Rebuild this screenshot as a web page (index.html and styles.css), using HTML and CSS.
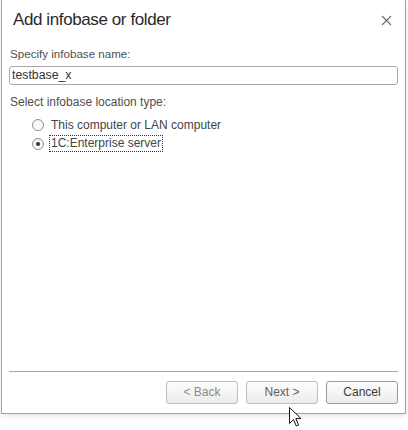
FILE: index.html
```html
<!DOCTYPE html>
<html>
<head>
	<meta charset="utf-8">
	<title>Add infobase or folder</title>
	<link rel="stylesheet" href="styles.css">
</head>
<body>
	<div class="dialog">
		<div class="title">
			<span class="caption">Add infobase or folder</span>
			<span class="close">
				<svg width="11" height="11" viewBox="0 0 11 11"><path d="M1 1 L10 10 M10 1 L1 10" stroke="#6b6b6b" stroke-width="1.1" fill="none"/></svg>
			</span>
		</div>
		<div class="content">
			<div class="label first">Specify infobase name:</div>
			<div class="input">testbase_x</div>
			<div class="label second">Select infobase location type:</div>
			<ul class="radios">
				<li><span class="radio"></span><span class="text">This computer or LAN computer</span></li>
				<li><span class="radio checked"></span><span class="text focus">1C:Enterprise server</span></li>
			</ul>
		</div>
		<div class="footer">
			<div class="line"></div>
			<div class="buttons">
				<span class="btn disabled">&lt; Back</span>
				<span class="btn next">Next &gt;</span>
				<span class="btn cancel">Cancel</span>
			</div>
		</div>
	</div>
	<!-- курсор мыши поверх кнопок -->
	<svg class="cursor" width="13" height="21" viewBox="0 0 13 21"><path d="M0.5 0.5 L0.5 16.5 L4.5 12.5 L7.3 19 L9.6 18 L6.8 11.6 L12 11.6 Z" fill="#fff" stroke="#111" stroke-width="1" stroke-linejoin="round"/></svg>
</body>
</html>
```

FILE: styles.css
```css
/*сброс*/
body,div,ul,li{margin: 0;padding: 0;}
ul{list-style-type: none;}
body{
	background: #fff;
	font: 12px/14px "Liberation Sans", Arial, sans-serif;
	color: #4f4f4f;
	position: relative;
	width: 408px;
	height: 430px;
	overflow: hidden;
}
.dialog{
	margin-left: 1px;
	width: 405px;
	height: 414px;
	box-sizing: border-box;
	border: 1px solid #a2a2a2;
	border-top: none;
	background: #fff;
	display: flex;
	flex-direction: column;
	box-shadow: 0 2px 5px rgba(0,0,0,0.10);
}
.title{
	height: 40px;
	display: flex;
	align-items: center;
	justify-content: space-between;
	padding: 0 13px 0 11px;
}
.title .caption{
	font-size: 17px;
	letter-spacing: -0.4px;
	color: #2a2a2a;
}
.title .close{display: flex;margin-top: 1px;}
.content{
	flex: 1;
	padding: 0 7px;
}
.label{padding-left: 1px;}
.label.first{margin-top: 7px;font-size: 11.6px;}
.label.second{margin-top: 10px;}
.input{
	margin-top: 5px;
	height: 19px;
	box-sizing: border-box;
	border: 1px solid #a9a9a9;
	border-radius: 3px;
	padding: 0 2px;
	line-height: 17px;
	font-size: 12.3px;
	color: #333;
}
.radios{
	margin-top: 6px;
	padding-left: 23px;
}
.radios li{
	height: 19px;
	display: flex;
	align-items: center;
}
.radio{
	width: 12px;
	height: 12px;
	box-sizing: border-box;
	border: 1px solid #8e8e8e;
	border-radius: 50%;
	background: linear-gradient(#f4f4f4, #fff);
	margin-right: 7px;
	display: flex;
	align-items: center;
	justify-content: center;
}
.radio.checked::after{
	content: "";
	width: 4px;
	height: 4px;
	border-radius: 50%;
	background: #333;
}
.text{color: #444;}
.text.focus{
	outline: 1px dotted #333;
	margin-left: -1px;
	padding: 0 1px 0 1px;
	line-height: 15px;
}
.footer{padding: 0 7px 9px 7px;}
.line{
	height: 1px;
	background: #a9a9a9;
}
.buttons{
	margin-top: 9px;
	display: flex;
	justify-content: flex-end;
	gap: 8px;
}
.btn{
	width: 72px;
	height: 23px;
	box-sizing: border-box;
	border: 1px solid #bdbdbd;
	border-radius: 3px;
	background: linear-gradient(#fdfdfd, #ececec);
	text-align: center;
	line-height: 21px;
	color: #6e6e6e;
}
.btn.disabled{color: #8a8a8a;}
.btn.next{color: #5f5f5f;}
.btn.cancel{
	border-color: #9a9a9a;
	color: #3a3a3a;
}
.cursor{
	position: absolute;
	left: 289px;
	top: 407px;
}
```
